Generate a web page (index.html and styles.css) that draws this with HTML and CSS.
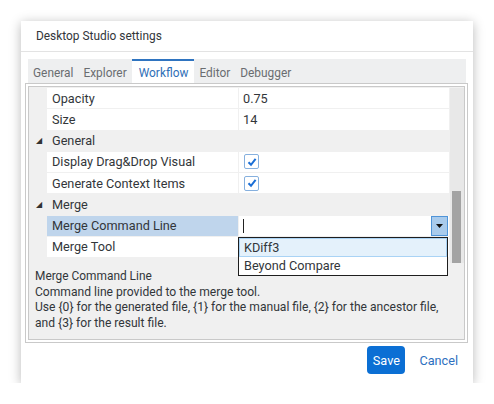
FILE: index.html
```html
<!DOCTYPE html>
<html>
<head>
<meta charset="utf-8">
<link rel="stylesheet" href="styles.css">
</head>
<body>
<div class="stage">
  <div class="dialog">
    <div class="header">Desktop Studio settings</div>
    <div class="content">
      <div class="tabs">
        <div class="tab">General</div>
        <div class="tab">Explorer</div>
        <div class="tab active">Workflow</div>
        <div class="tab">Editor</div>
        <div class="tab">Debugger</div>
      </div>
      <div class="panel">
        <div class="inner">
          <div class="gridwrap">
            <div class="grid">
              <div class="gut"></div><div class="name">Opacity</div><div class="val">0.75</div>
              <div class="gut"></div><div class="name">Size</div><div class="val">14</div>
              <div class="gut tri">&#9698;</div><div class="group">General</div>
              <div class="gut"></div><div class="name">Display Drag&amp;Drop Visual</div><div class="val"><span class="cb"><svg width="10" height="10" viewBox="0 0 10 10"><path d="M1.5 5.2 L4 7.8 L8.6 1.8" fill="none" stroke="#1b6fd6" stroke-width="2"/></svg></span></div>
              <div class="gut"></div><div class="name">Generate Context Items</div><div class="val"><span class="cb"><svg width="10" height="10" viewBox="0 0 10 10"><path d="M1.5 5.2 L4 7.8 L8.6 1.8" fill="none" stroke="#1b6fd6" stroke-width="2"/></svg></span></div>
              <div class="gut tri">&#9698;</div><div class="group">Merge</div>
              <div class="gut"></div><div class="name sel">Merge Command Line</div><div class="val edit"><span class="caret"></span><span class="ddbtn"><svg width="7" height="4" viewBox="0 0 7 4"><path d="M0 0 H7 L3.5 4 Z" fill="#111"/></svg></span></div>
              <div class="gut"></div><div class="name">Merge Tool</div><div class="val"></div>
            </div>
            <div class="scroll"><div class="thumb"></div></div>
            <div class="list">
              <div class="item hot">KDiff3</div>
              <div class="item">Beyond Compare</div>
            </div>
          </div>
          <div class="desc">
            <div class="dtitle">Merge Command Line</div>
            <div class="dtext">Command line provided to the merge tool.<br>Use {0} for the generated file, {1} for the manual file, {2} for the ancestor file,<br>and {3} for the result file.</div>
          </div>
        </div>
      </div>
    </div>
    <div class="footer">
      <button class="save">Save</button>
      <button class="cancel">Cancel</button>
    </div>
  </div>
</div>
</body>
</html>
```

FILE: styles.css
```css
* { box-sizing: border-box; }
html, body { margin: 0; padding: 0; background: #fff; }
body { font-family: "Roboto", "Lato", sans-serif; color: #32363a; }
.stage { padding: 21px 0 0 21px; }
.dialog {
  width: 452px; height: 362px; background: #fff;
  box-shadow: 0 2px 11px rgba(0,0,0,0.28);
  display: flex; flex-direction: column;
}
.header {
  height: 31px; border-bottom: 1px solid #e3e3e3;
  padding-left: 15px; display: flex; align-items: center;
  font-size: 11.9px; color: #32363a;
}
.content { padding: 7px 5px 0 4px; }
.tabs {
  margin: 0 2px 0 3px; height: 24px; background: #eeeff0;
  display: flex; align-items: stretch; padding-left: 0;
}
.tab {
  font-size: 11.9px; color: #6a6d70; padding: 2px 5px 0 5px;
  display: flex; align-items: center; border-top: 2px solid transparent;
}
.tab.active { background: #fff; color: #2f6fb7; border-top-color: #2f74c0; padding: 2px 6px 0 7px; }
.panel { border: 1px solid #c9c9c9; padding: 2px; height: 260px; }
.inner { border: 1px solid #c9c9c9; height: 100%; background: #f0f0f0; display: flex; flex-direction: column; }
.gridwrap { position: relative; height: 176px; display: flex; padding-top: 1px; }
.grid {
  display: grid; grid-template-columns: 17px 191px 210px;
  grid-auto-rows: 20.25px; row-gap: 1px; column-gap: 1px; align-content: start;
  font-size: 12.7px; width: 420px;
}
.gut { background: #f0f0f0; }
.tri { font-size: 8px; color: #333; display: flex; align-items: center; justify-content: flex-end; padding-right: 4px; }
.name { background: #fff; padding-left: 5px; display: flex; align-items: center; }
.name.sel { background: #bfd5ec; }
.val { background: #fff; padding-left: 4px; display: flex; align-items: center; position: relative; }
.group { grid-column: span 2; background: #f0f0f0; padding-left: 5px; display: flex; align-items: center; }
.cb {
  width: 15px; height: 15px; border: 1px solid #86b0de; border-radius: 2px; background: #fff;
  display: flex; align-items: center; justify-content: center; margin-left: 1px;
}
.caret { width: 1px; height: 14px; background: #222; }
.ddbtn {
  position: absolute; right: 1px; top: 0; width: 17px; height: 20px;
  background: #a9cbec; border: 1px solid #4f94d8;
  display: flex; align-items: center; justify-content: center;
}
.scroll { margin-left: 1px; width: 14px; background: #e8e8e8; position: relative; }
.thumb { position: absolute; left: 2px; right: 3px; top: 103px; height: 72px; background: #a3a3a3; }
.list {
  position: absolute; left: 209px; top: 150px; width: 210px;
  background: #fff; border: 1px solid #1e1e1e; font-size: 12.7px; z-index: 2;
}
.item { height: 18.5px; padding-left: 4px; display: flex; align-items: center; border: 1px solid transparent; }
.item.hot { background: #e4f1fb; border-color: #a9d3f5; }
.desc { padding: 6px 0 0 6px; font-size: 12.1px; line-height: 15.6px; color: #32363a; }
.dtitle { font-size: 11.9px; }
.footer { flex: 1; display: flex; justify-content: flex-end; align-items: flex-start; padding: 3px 15px 0 0; gap: 14px; }
.save {
  height: 28px; width: 38px; border: none; border-radius: 4px; background: #0b6fd4; color: #fff;
  font-family: inherit; font-size: 12.7px; padding: 0;
}
.cancel {
  height: 28px; border: none; background: none; color: #2d70c0; font-family: inherit; font-size: 12.7px; padding: 0;
}
```
